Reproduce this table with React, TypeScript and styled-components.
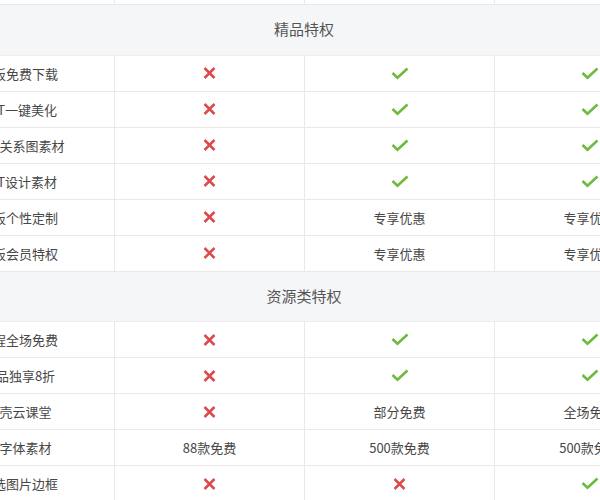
import styled, { createGlobalStyle } from "styled-components";

const GlobalStyle = createGlobalStyle`
  html, body {
    margin: 0;
    padding: 0;
    background: #ffffff;
  }
`;

const Viewport = styled.div`
  width: 600px;
  height: 500px;
  overflow: hidden;
  background: #ffffff;
`;

// the table is wider than the window; we look at it scrolled a bit right and down
const Table = styled.div`
  display: grid;
  grid-template-columns: repeat(4, 190px);
  width: 760px;
  margin: -31px 0 0 -76px;

  font-family: "Noto Sans CJK SC", "Noto Sans", sans-serif;
  color: #474747;
`;

const SectionTitle = styled.div`
  grid-column: 1 / -1;
  display: flex;
  align-items: center;
  justify-content: center;
  height: 50.5px;
  padding-bottom: 2px;
  box-sizing: border-box;

  background: #f5f6f8;
  border-bottom: 1px solid #eceef1;

  font-size: 15px;
  color: #555555;
`;

const Cell = styled.div<{ $first?: boolean }>`
  display: flex;
  align-items: center;
  justify-content: center;
  height: 36px;
  box-sizing: border-box;

  border-bottom: 1px solid #e9e9e9;
  border-left: ${(p) => (p.$first ? "none" : "1px solid #e9e9e9")};
  background: #ffffff;

  font-size: 13px;
  white-space: nowrap;
`;

const Cross = () => (
  <svg width="13" height="12" viewBox="0 0 13 12">
    <path d="M1.5 1 L11.5 11 M11.5 1 L1.5 11" stroke="#dc4a4c" strokeWidth="2.5" fill="none" />
  </svg>
);

const Check = () => (
  <svg width="18" height="13" viewBox="0 0 18 13">
    <polyline points="1.5,6 6.5,10.8 16.5,1.5" stroke="#6cbb3c" strokeWidth="2.6" fill="none" />
  </svg>
);

type Value = "x" | "v" | string;

type Row = { name: string; values: Value[] };

type Section = { title: string; rows: Row[] };

const sections: Section[] = [
  {
    title: "精品特权",
    rows: [
      { name: "模板免费下载", values: ["x", "v", "v"] },
      { name: "PPT一键美化", values: ["x", "v", "v"] },
      { name: "逻辑关系图素材", values: ["x", "v", "v"] },
      { name: "PPT设计素材", values: ["x", "v", "v"] },
      { name: "模板个性定制", values: ["x", "专享优惠", "专享优惠"] },
      { name: "模板会员特权", values: ["x", "专享优惠", "专享优惠"] },
    ],
  },
  {
    title: "资源类特权",
    rows: [
      { name: "课程全场免费", values: ["x", "v", "v"] },
      { name: "商品独享8折", values: ["x", "v", "v"] },
      { name: "贝壳云课堂", values: ["x", "部分免费", "全场免费"] },
      { name: "新字体素材", values: ["88款免费", "500款免费", "500款免费"] },
      { name: "精选图片边框", values: ["x", "x", "v"] },
    ],
  },
];

const renderValue = (value: Value) => {
  if (value === "x") return <Cross />;
  if (value === "v") return <Check />;
  return value;
};

export default function App() {
  return (
    <Viewport>
      <GlobalStyle />
      <Table>
        {/* last row of the part above, scrolled out of view */}
        <Cell $first />
        <Cell />
        <Cell />
        <Cell />

        {sections.map((section) => (
          <>
            <SectionTitle key={section.title}>{section.title}</SectionTitle>
            {section.rows.map((row) => (
              <>
                <Cell $first key={row.name}>
                  {row.name}
                </Cell>
                {row.values.map((value, index) => (
                  <Cell key={row.name + index}>{renderValue(value)}</Cell>
                ))}
              </>
            ))}
          </>
        ))}
      </Table>
    </Viewport>
  );
}
